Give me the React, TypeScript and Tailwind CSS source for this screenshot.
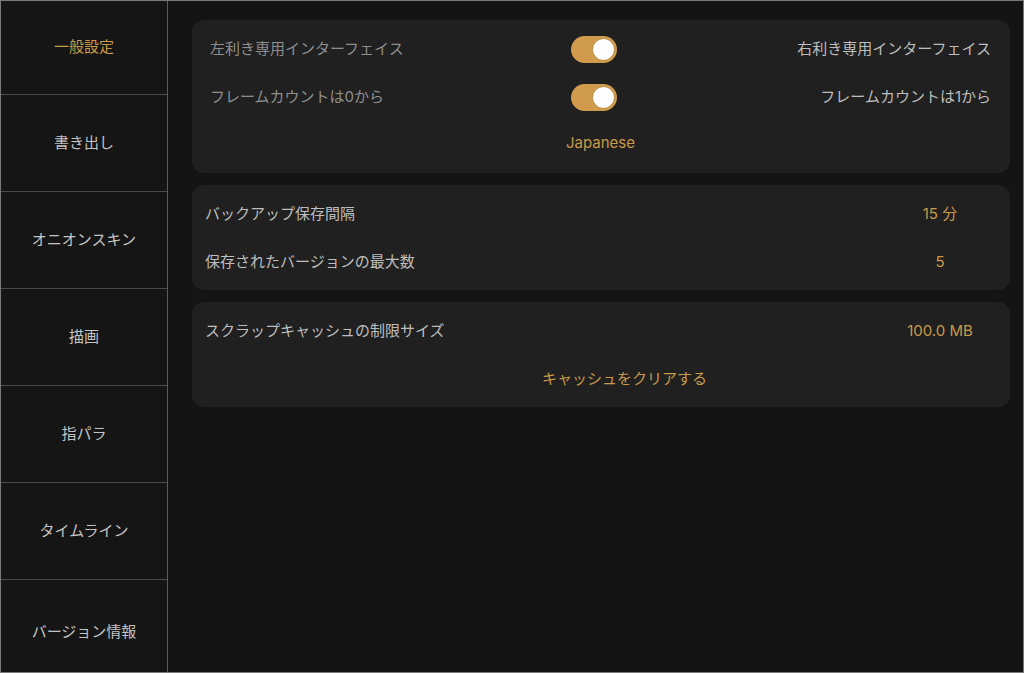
const FONT = "font-['Inter','Noto_Sans_CJK_JP',sans-serif]";

const MENU = ["一般設定", "書き出し", "オニオンスキン", "描画", "指パラ", "タイムライン", "バージョン情報"];

function Toggle() {
  return (
    <div className="flex h-[27px] w-[46px] items-center justify-end rounded-full bg-[#d09c4b] p-[2px]">
      <div className="h-[23px] w-[23px] rounded-full border border-[#b8883e] bg-white" />
    </div>
  );
}

function Sidebar() {
  return (
    <div className="flex w-[167px] shrink-0 flex-col border-r border-[#5a5a5a] bg-[#151515]">
      {MENU.map((m, i) => (
        <div
          key={m}
          className={
            "flex shrink-0 items-center justify-center text-[15px] " +
            (i === 0 ? "h-[93px] " : "h-[97px] border-t border-[#4a4a4a] ") +
            (i === 6 ? "pt-[8px] " : "") +
            (i === 0 ? "text-[#c99a4a]" : "text-[#c4c4c4]")
          }
        >
          {m}
        </div>
      ))}
    </div>
  );
}

export default function App() {
  return (
    <div className={"flex h-[673px] w-[1024px] overflow-hidden border border-[#7a7a7a] bg-[#141414] " + FONT}>
      <Sidebar />
      <div className="flex flex-1 flex-col gap-[12px] pl-[24px] pr-[13px] pt-[19px]">
        {/* interface */}
        <div className="rounded-[12px] bg-[#202020] pb-[8px] pl-[18px] pr-[19px] pt-[5px] text-[15px]">
          <div className="grid h-[48px] grid-cols-[353px_46px_1fr] items-center gap-[8px]">
            <span className="text-[#8e8e8e]">左利き専用インターフェイス</span>
            <Toggle />
            <span className="text-right text-[#bdbdbd]">右利き専用インターフェイス</span>
          </div>
          <div className="grid h-[48px] grid-cols-[353px_46px_1fr] items-center gap-[8px]">
            <span className="text-[#8e8e8e]">フレームカウントは0から</span>
            <Toggle />
            <span className="text-right text-[#bdbdbd]">フレームカウントは1から</span>
          </div>
          <div className="flex h-[44px] items-center justify-center text-[#c99a4a]">Japanese</div>
        </div>
        {/* backup */}
        <div className="rounded-[12px] bg-[#202020] pb-[4px] pl-[13px] pr-[20px] pt-[5px] text-[15px]">
          <div className="flex h-[48px] items-center justify-between">
            <span className="text-[#bdbdbd]">バックアップ保存間隔</span>
            <span className="w-[100px] text-center text-[#c99a4a]">15 分</span>
          </div>
          <div className="flex h-[48px] items-center justify-between">
            <span className="text-[#bdbdbd]">保存されたバージョンの最大数</span>
            <span className="w-[100px] text-center text-[#c99a4a]">5</span>
          </div>
        </div>
        {/* cache */}
        <div className="rounded-[12px] bg-[#202020] pb-[4px] pl-[13px] pr-[20px] pt-[5px] text-[15px]">
          <div className="flex h-[48px] items-center justify-between">
            <span className="text-[#bdbdbd]">スクラップキャッシュの制限サイズ</span>
            <span className="w-[100px] text-center text-[#c99a4a]">100.0 MB</span>
          </div>
          <div className="flex h-[48px] items-center justify-center pl-[54px] text-[#c99a4a]">
            キャッシュをクリアする
          </div>
        </div>
      </div>
    </div>
  );
}
